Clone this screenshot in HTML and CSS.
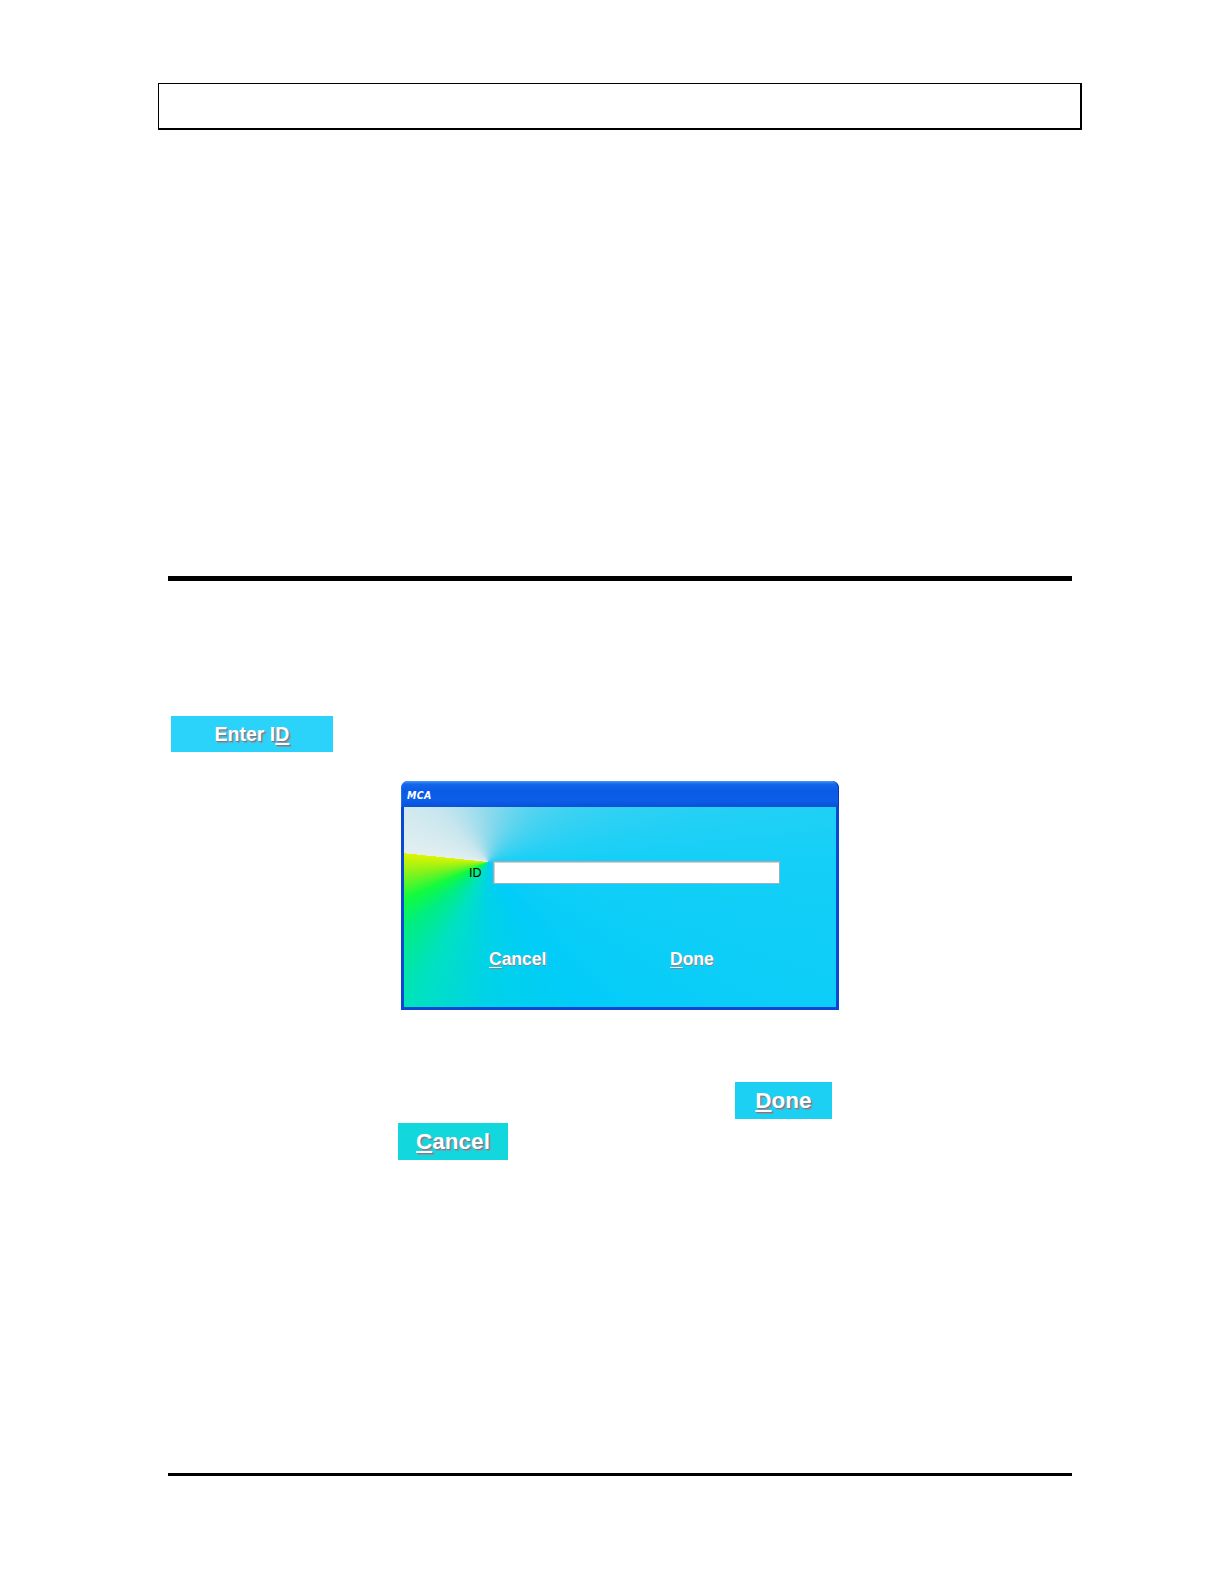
FILE: index.html
```html
<!DOCTYPE html>
<html>
<head>
<meta charset="utf-8">
<link rel="stylesheet" href="styles.css">
</head>
<body>
<div class="page">
  <div class="header-box"></div>
  <div class="rule-thick"></div>
  <div class="row row-enter"><span class="btn btn-enter">Enter I<u>D</u></span></div>
  <div class="dialog">
    <div class="titlebar"><span class="title">MCA</span></div>
    <div class="dialog-body">
      <div class="id-row">
        <span class="id-label">ID</span>
        <span class="id-input"></span>
      </div>
      <div class="dlg-buttons">
        <span class="dlg-btn dlg-cancel"><u>C</u>ancel</span>
        <span class="dlg-btn dlg-done"><u>D</u>one</span>
      </div>
    </div>
  </div>
  <div class="row row-done"><span class="btn btn-done"><u>D</u>one</span></div>
  <div class="row row-cancel"><span class="btn btn-cancel"><u>C</u>ancel</span></div>
  <div class="rule-bottom"></div>
</div>
</body>
</html>
```

FILE: styles.css
```css
html, body {
  margin: 0;
  padding: 0;
  background: #ffffff;
  overflow: hidden;
}
body {
  font-family: "Liberation Sans", Arial, sans-serif;
}
.page {
  padding-top: 83px;
}
.header-box {
  margin-left: 158px;
  width: 924px;
  height: 47px;
  box-sizing: border-box;
  border: 2px solid #000;
  border-left-width: 1px;
  border-top-width: 1px;
}
.rule-thick {
  margin-top: 446px;
  margin-left: 168px;
  width: 904px;
  height: 5px;
  background: #000;
}
.row {
  display: flex;
}
.btn {
  display: flex;
  align-items: center;
  justify-content: center;
  color: #fff;
  font-weight: bold;
  box-sizing: border-box;
  text-shadow: 1px 1px 0 #6a7f90, 2px 2px 1px #8496a6;
}
.btn u {
  text-decoration-thickness: 2px;
  text-underline-offset: 2px;
}
.row-enter {
  margin-top: 135px;
  padding-left: 171px;
}
.btn-enter {
  width: 162px;
  height: 36px;
  background: #2bd3fb;
  font-size: 19.5px;
  padding-top: 1px;
}
.dialog {
  margin-top: 29px;
  margin-left: 401px;
  width: 438px;
  height: 229px;
  display: flex;
  flex-direction: column;
  box-sizing: border-box;
}
.titlebar {
  height: 26px;
  border-radius: 7px 7px 0 0;
  background: linear-gradient(#4a98f8 0px, #1466ec 3px, #0a5ae6 10px, #0c5ee8 19px, #0a50d8 26px);
  display: flex;
  align-items: center;
  padding-left: 6px;
  box-shadow: inset 1px 0 0 #2a6fe8, inset -1px 0 0 #0736b8;
}
.title {
  color: #fff;
  font-family: "DejaVu Sans Condensed", "DejaVu Sans", sans-serif;
  font-weight: bold;
  font-size: 10.5px;
  letter-spacing: 0.3px;
  padding-top: 2px;
  font-style: italic;
}
.dialog-body {
  flex: 1;
  border: 3px solid #0a48d4;
  border-top: 0;
  background: conic-gradient(from 276deg at 84px 55px,
    #e2eff1 0deg,
    #c8e6ee 40deg,
    #8ed9ec 84deg,
    #4cd3f0 130deg,
    #14cff7 174deg,
    #02ccf9 230deg,
    #00d2e8 264deg,
    #00e2c0 293deg,
    #00ee80 315deg,
    #12fb3e 330deg,
    #8af21a 346deg,
    #dff400 360deg);
  display: flex;
  flex-direction: column;
}
.id-row {
  display: flex;
  align-items: center;
  margin-top: 54px;
  padding-left: 65px;
  gap: 10px;
}
.id-label {
  font-size: 12.5px;
  color: #000;
  width: 14px;
  padding-top: 1px;
}
.id-input {
  width: 287px;
  height: 23px;
  box-sizing: border-box;
  background: #fff;
  border: 1px solid #9bb0b8;
  box-shadow: inset 1px 1px 0 #c6d4d8;
}
.dlg-buttons {
  display: flex;
  margin-top: 65px;
  padding-left: 85px;
}
.dlg-btn {
  color: #fff;
  font-weight: bold;
  font-size: 17.5px;
  text-shadow: 1px 1px 0 #7a8a94;
}
.dlg-btn u {
  text-underline-offset: 2px;
}
.dlg-cancel {
  width: 181px;
}
.row-done {
  margin-top: 72px;
  padding-left: 735px;
}
.btn-done {
  width: 97px;
  height: 37px;
  background: #1bd0f3;
  font-size: 22.5px;
}
.row-cancel {
  margin-top: 4px;
  padding-left: 398px;
}
.btn-cancel {
  width: 110px;
  height: 37px;
  background: #12d8de;
  font-size: 22.5px;
}
.rule-bottom {
  margin-top: 313px;
  margin-left: 168px;
  width: 904px;
  height: 3px;
  background: #000;
}
```
